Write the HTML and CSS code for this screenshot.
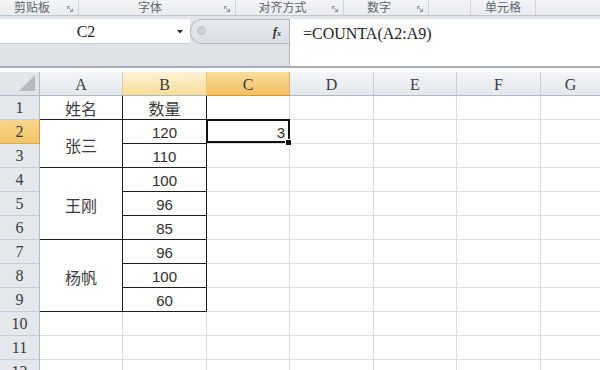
FILE: index.html
```html
<!DOCTYPE html>
<html lang="zh-CN">
<head>
<meta charset="utf-8">
<link rel="stylesheet" href="styles.css">
</head>
<body>
<div class="top">
  <div class="ribbon">
    <div class="grp g1"><span class="lbl">剪贴板</span><svg class="launch" viewBox="0 0 6 6"><path d="M0.5 3V0.5H3M1.5 1.5L5.5 5.5M5.5 2.8V5.5H2.8" fill="none" stroke="#8c939c" stroke-width="1"/></svg></div>
    <div class="grp g2"><span class="lbl">字体</span><svg class="launch" viewBox="0 0 6 6"><path d="M0.5 3V0.5H3M1.5 1.5L5.5 5.5M5.5 2.8V5.5H2.8" fill="none" stroke="#8c939c" stroke-width="1"/></svg></div>
    <div class="grp g3"><span class="lbl">对齐方式</span><svg class="launch" viewBox="0 0 6 6"><path d="M0.5 3V0.5H3M1.5 1.5L5.5 5.5M5.5 2.8V5.5H2.8" fill="none" stroke="#8c939c" stroke-width="1"/></svg></div>
    <div class="grp g4"><span class="lbl">数字</span><svg class="launch" viewBox="0 0 6 6"><path d="M0.5 3V0.5H3M1.5 1.5L5.5 5.5M5.5 2.8V5.5H2.8" fill="none" stroke="#8c939c" stroke-width="1"/></svg></div>
    <div class="grp g5"></div>
    <div class="grp g6"><span class="lbl">单元格</span></div>
    <div class="grp g7"></div>
  </div>
  <div class="fbar">
    <div class="fleft">
      <div class="nrow">
        <div class="namebox"><span class="nm">C2</span><svg class="dd" viewBox="0 0 6 4"><path d="M0 0H6L3 3.6Z" fill="#2b2b2b"/></svg></div>
        <div class="fxarea"><span class="knob"></span><span class="fx">f<small>x</small></span></div>
      </div>
      <div class="ngrey"></div>
    </div>
    <div class="finput">=COUNTA(A2:A9)</div>
  </div>
</div>
<div class="sheet">
  <div class="corner"><svg viewBox="0 0 16 16"><path d="M16 0V16H0Z" fill="#b5bac1"/></svg></div>
  <div class="ch">A</div>
  <div class="ch hov">B</div>
  <div class="ch sel">C</div>
  <div class="ch">D</div>
  <div class="ch">E</div>
  <div class="ch">F</div>
  <div class="ch last">G</div>

  <div class="rh">1</div>
  <div class="c t cn">姓名</div>
  <div class="c t cn">数量</div>
  <div class="c"></div><div class="c"></div><div class="c"></div><div class="c"></div><div class="c last"></div>

  <div class="rh sel">2</div>
  <div class="c t cn m2">张三</div>
  <div class="c t num">120</div>
  <div class="c act num">3</div>
  <div class="c"></div><div class="c"></div><div class="c"></div><div class="c last"></div>

  <div class="rh">3</div>
  <div class="c t num">110</div>
  <div class="c"></div><div class="c"></div><div class="c"></div><div class="c"></div><div class="c last"></div>

  <div class="rh">4</div>
  <div class="c t cn m3">王刚</div>
  <div class="c t num">100</div>
  <div class="c"></div><div class="c"></div><div class="c"></div><div class="c"></div><div class="c last"></div>

  <div class="rh">5</div>
  <div class="c t num">96</div>
  <div class="c"></div><div class="c"></div><div class="c"></div><div class="c"></div><div class="c last"></div>

  <div class="rh">6</div>
  <div class="c t num">85</div>
  <div class="c"></div><div class="c"></div><div class="c"></div><div class="c"></div><div class="c last"></div>

  <div class="rh">7</div>
  <div class="c t cn m3">杨帆</div>
  <div class="c t num">96</div>
  <div class="c"></div><div class="c"></div><div class="c"></div><div class="c"></div><div class="c last"></div>

  <div class="rh">8</div>
  <div class="c t num">100</div>
  <div class="c"></div><div class="c"></div><div class="c"></div><div class="c"></div><div class="c last"></div>

  <div class="rh">9</div>
  <div class="c t num">60</div>
  <div class="c"></div><div class="c"></div><div class="c"></div><div class="c"></div><div class="c last"></div>

  <div class="rh">10</div>
  <div class="c"></div><div class="c"></div><div class="c"></div><div class="c"></div><div class="c"></div><div class="c"></div><div class="c last"></div>

  <div class="rh">11</div>
  <div class="c"></div><div class="c"></div><div class="c"></div><div class="c"></div><div class="c"></div><div class="c"></div><div class="c last"></div>

  <div class="rh">12</div>
  <div class="c"></div><div class="c"></div><div class="c"></div><div class="c"></div><div class="c"></div><div class="c"></div><div class="c last"></div>
</div>
</body>
</html>
```

FILE: styles.css
```css
html, body {
  margin: 0;
  padding: 0;
}
body {
  width: 600px;
  height: 370px;
  overflow: hidden;
  background: #ffffff;
  font-family: "Liberation Sans", "Noto Sans CJK SC", sans-serif;
}

/* ---------- ribbon group labels ---------- */
.top {
  background: #e2e6eb;
}
.ribbon {
  display: flex;
  height: 16px;
  box-sizing: border-box;
  background: linear-gradient(#f2f4f7, #e8ebef);
  border-bottom: 1px solid #c2c8cf;
  font-family: "Noto Sans CJK SC", sans-serif;
  font-size: 12px;
  line-height: 14px;
  color: #60656c;
  overflow: hidden;
}
.grp {
  display: flex;
  align-items: flex-start;
  box-sizing: border-box;
  border-right: 1px solid #cfd4da;
}
.g1 { width: 79px; }
.g2 { width: 157px; }
.g3 { width: 108px; }
.g4 { width: 85px; }
.g5 { width: 42px; }
.g6 { width: 65px; }
.g7 { flex: 1; border-right: none; }
.lbl {
  flex: 1;
  text-align: center;
  white-space: nowrap;
}
.launch {
  width: 6px;
  height: 6px;
  margin: 6px 5px 0 3px;
  flex: none;
}

/* ---------- formula bar ---------- */
.fbar {
  display: flex;
  margin-top: 3px;
  height: 49px;
  box-sizing: border-box;
  border-bottom: 2px solid #a6aeb8;
}
.fleft {
  width: 290px;
  box-sizing: border-box;
  border-right: 1px solid #aab2bc;
  display: flex;
  flex-direction: column;
}
.nrow {
  display: flex;
  height: 25px;
}
.namebox {
  width: 190px;
  background: #ffffff;
  display: flex;
  align-items: center;
  box-sizing: border-box;
  border-bottom: 1px solid #c6ccd3;
}
.nm {
  width: 172px;
  text-align: center;
  font-family: "Liberation Serif", "DejaVu Serif", serif;
  font-size: 16px;
  color: #222222;
  padding-top: 2px;
}
.dd {
  width: 6px;
  height: 4px;
  margin-left: 5px;
  margin-top: 2px;
}
.fxarea {
  flex: 1;
  display: flex;
  align-items: center;
  justify-content: space-between;
  box-sizing: border-box;
  background: linear-gradient(#e6e9ed, #dbe0e6);
  border: 1px solid #b4bcc6;
  border-right: none;
  border-radius: 12px 0 0 12px;
  padding: 0 8px 0 6px;
}
.knob {
  width: 7px;
  height: 7px;
  border-radius: 50%;
  background: #cdd2d8;
  border: 1px solid #bfc5cc;
  margin-bottom: 2px;
}
.fx {
  font-family: "Liberation Serif", "DejaVu Serif", serif;
  font-style: italic;
  font-weight: bold;
  font-size: 13px;
  color: #333333;
}
.fx small {
  font-size: 8px;
}
.ngrey {
  flex: 1;
  background: #dfe3e8;
}
.finput {
  flex: 1;
  background: #ffffff;
  padding: 5px 0 0 13px;
  font-family: "Liberation Serif", "DejaVu Serif", serif;
  font-size: 16px;
  line-height: 20px;
  color: #222222;
}

/* ---------- sheet ---------- */
.sheet {
  margin-top: 4px;
  display: grid;
  grid-template-columns: 40px 83px 84px 83px 84px 83px 84px 59px;
  grid-auto-rows: 24px;
}
.sheet > div {
  box-sizing: border-box;
  display: flex;
  align-items: center;
  justify-content: center;
}
.corner {
  background: #e1e5ea;
  border-right: 1px solid #b1b9c3;
  border-bottom: 1px solid #b1b9c3;
  justify-content: flex-end !important;
  align-items: flex-end !important;
}
.corner svg {
  width: 16px;
  height: 16px;
  margin: 0 4px 4px 0;
}
.ch {
  background: linear-gradient(#f4f6f8, #e3e7ec);
  border-right: 1px solid #c6ccd3;
  border-bottom: 1px solid #b1b9c3;
  font-family: "Liberation Serif", "DejaVu Serif", serif;
  font-size: 16px;
  color: #3a3a3a;
  padding-top: 3px;
}
.ch.hov {
  background: linear-gradient(#fdf3d6, #f9dd95);
  border-right-color: #e8c67e;
}
.ch.sel {
  background: linear-gradient(#f9dc9c, #f2c161);
  border-right-color: #e0ac4f;
  border-bottom-color: #d99a2b;
}
.rh {
  background: #e4e8ed;
  border-right: 1px solid #b1b9c3;
  border-bottom: 1px solid #c8ced5;
  font-family: "Liberation Serif", "DejaVu Serif", serif;
  font-size: 16px;
  color: #3a3a3a;
  padding-top: 1px;
}
.rh.sel {
  background: linear-gradient(#f8d690, #f3c465);
  border-right-color: #d99a2b;
  border-bottom-color: #e0ac4f;
}
.c {
  border-right: 1px solid #dadde1;
  border-bottom: 1px solid #dadde1;
  color: #2e2e2e;
}
.last {
  border-right: none !important;
}
.c.t {
  border-right-color: #1e1e1e;
  border-bottom-color: #1e1e1e;
}
.m2 { grid-row: span 2; }
.m3 { grid-row: span 3; }
.cn {
  font-family: "Noto Sans CJK SC", sans-serif;
  font-size: 16px;
  color: #3c3c3c;
}
.m2, .m3 {
  padding-top: 3px;
}
.num {
  font-family: "Liberation Sans", sans-serif;
  font-size: 15px;
  padding-top: 1px;
}
.c.act {
  position: relative;
  justify-content: flex-end;
  padding-right: 4px;
}
.c.act::before {
  content: "";
  position: absolute;
  left: -1px;
  top: -1px;
  right: -1px;
  bottom: 0;
  border: 2px solid #111111;
}
.c.act::after {
  content: "";
  position: absolute;
  right: -3px;
  bottom: -3px;
  width: 5px;
  height: 5px;
  background: #111111;
  border: 1px solid #ffffff;
}
```
